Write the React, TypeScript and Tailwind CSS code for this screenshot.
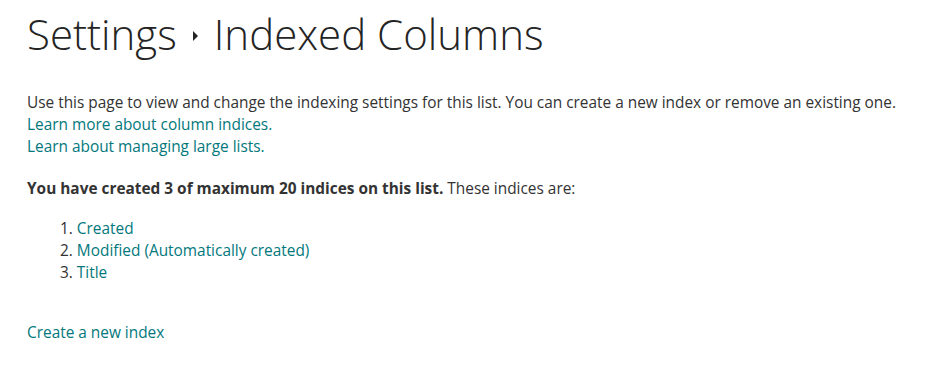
import React from 'react';

const FONT = '"Open Sans", "Liberation Sans", sans-serif';

const indices = ['Created', 'Modified (Automatically created)', 'Title'];

const App: React.FC = () => {
  return (
    <div className="min-h-[365px] bg-white text-[#333333]" style={{ fontFamily: FONT }}>
      <div className="pl-[27px] pt-[6px]">
        <h1 className="flex items-center text-[42px] font-light leading-[56px] text-[#252424]">
          <span>Settings</span>
          <span className="mx-[16px] mt-[4px] inline-block h-0 w-0 border-y-[5px] border-l-[5px] border-y-transparent border-l-[#252424]" />
          <span>Indexed Columns</span>
        </h1>

        <div className="mt-[30px] text-[15.4px] leading-[22px]">
          <div>
            Use this page to view and change the indexing settings for this list. You can create a new index or remove an existing one.
          </div>
          <a className="block text-[#03787c]" href="#">Learn more about column indices.</a>
          <a className="block text-[#03787c]" href="#">Learn about managing large lists.</a>

          <div className="mt-[20px]">
            <span className="font-bold">You have created 3 of maximum 20 indices on this list.</span> These indices are:
          </div>

          <ol className="mt-[18px] pl-[33px]">
            {indices.map((name, i) => (
              <li key={name}>
                {i + 1}. <a className="text-[#03787c]" href="#">{name}</a>
              </li>
            ))}
          </ol>

          <a className="mt-[38px] block text-[#03787c]" href="#">Create a new index</a>
        </div>
      </div>
    </div>
  );
};

export default App;
